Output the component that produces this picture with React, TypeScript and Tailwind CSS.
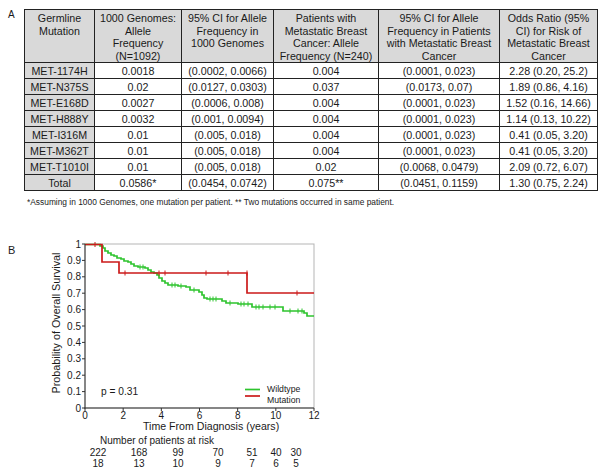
import React from "react";

const greenPath =
  "M85,242.5 H100 V244 H103 V246 H105 V249 H108 V251 H111 V253 H114 V254 H117 V256 H121 V257 H124 V259 H128 V260 H131 V262 H134 V264 H138 V265 H145 V266 H148 V268 H151 V270 H154 V271 H157 V273 H159 V276 H162 V279 H165 V281 H168 V283 H178 V284 H186 V285 H190 V288 H199 V290 H202 V293 H204 V296 H207 V297 H222 V299 H226 V301 H238 V302 H252 V305 H283 V309 H304 V311 H307 V314 H314";
const redPath = "M85,242.5 H102 V260 H119 V271 H247 V291 H314";

const greenCensor: [number, number][] = [
  [140, 265], [143, 265], [172, 283], [175, 283], [181, 284], [194, 288], [210, 297], [213, 297], [216, 297],
  [230, 301], [241, 302], [244, 302], [248, 302], [256, 305], [259, 305], [263, 305], [270, 305], [275, 305],
  [290, 309], [298, 309], [302, 309],
];
const redCensor: [number, number][] = [
  [95, 242.5], [125, 271], [159, 271], [165, 271], [206, 271], [228, 271], [247, 271], [297, 291],
];

const rows = [
  ["MET-1174H", "0.0018", "(0.0002, 0.0066)", "0.004", "(0.0001, 0.023)", "2.28 (0.20, 25.2)"],
  ["MET-N375S", "0.02", "(0.0127, 0.0303)", "0.037", "(0.0173, 0.07)", "1.89 (0.86, 4.16)"],
  ["MET-E168D", "0.0027", "(0.0006, 0.008)", "0.004", "(0.0001, 0.023)", "1.52 (0.16, 14.66)"],
  ["MET-H888Y", "0.0032", "(0.001, 0.0094)", "0.004", "(0.0001, 0.023)", "1.14 (0.13, 10.22)"],
  ["MET-I316M", "0.01", "(0.005, 0.018)", "0.004", "(0.0001, 0.023)", "0.41 (0.05, 3.20)"],
  ["MET-M362T", "0.01", "(0.005, 0.018)", "0.004", "(0.0001, 0.023)", "0.41 (0.05, 3.20)"],
  ["MET-T1010I", "0.01", "(0.005, 0.018)", "0.02", "(0.0068, 0.0479)", "2.09 (0.72, 6.07)"],
  ["Total", "0.0586*", "(0.0454, 0.0742)", "0.075**", "(0.0451, 0.1159)", "1.30 (0.75, 2.24)"],
];

const risk1 = ["222", "168", "99", "70", "51", "40", "30"];
const risk2 = ["18", "13", "10", "9", "7", "6", "5"];
const riskW = ["w-[40px]", "w-[42px]", "w-[36px]", "w-[44px]", "w-[24px]", "w-[24px]", "w-[16px]"];

const th = "border border-[#222] bg-[#d9d9d9] align-top text-center font-normal p-0 pt-[2px] leading-[12.5px] whitespace-nowrap";
const td = "border border-[#222] text-center p-0 h-[16px] leading-[14px] whitespace-nowrap";

export default function App() {
  const yTicks = Array.from({ length: 11 }, (_, i) => i);
  const xTicks = [0, 2, 4, 6, 8, 10, 12];
  return (
    <div className="w-[600px] h-[474px] bg-white text-[#1a1a1a] overflow-hidden font-['Liberation_Sans',Arial,sans-serif]">
      <div className="flex pt-[9px]">
        <div className="w-[24px] pl-[8px] text-[10px] leading-none pt-[1px]">A</div>
        <table className="border-collapse table-fixed w-[573px] text-[10.7px]">
          <colgroup>
            <col className="w-[70px]" />
            <col className="w-[87px]" />
            <col className="w-[92px]" />
            <col className="w-[105px]" />
            <col className="w-[121px]" />
            <col className="w-[98px]" />
          </colgroup>
          <thead>
            <tr className="h-[52px]">
              <th className={th}>Germline<br />Mutation</th>
              <th className={th}>1000 Genomes:<br />Allele<br />Frequency<br />(N=1092)</th>
              <th className={th}>95% CI for Allele<br />Frequency in<br />1000 Genomes</th>
              <th className={th}>Patients with<br />Metastatic Breast<br />Cancer: Allele<br />Frequency (N=240)</th>
              <th className={th}>95% CI for Allele<br />Frequency in Patients<br />with Metastatic Breast<br />Cancer</th>
              <th className={th}>Odds Ratio (95%<br />CI) for Risk of<br />Metastatic Breast<br />Cancer</th>
            </tr>
          </thead>
          <tbody>
            {rows.map((r) => (
              <tr key={r[0]}>
                {r.map((c, i) => (
                  <td key={i} className={i === 0 ? td + " bg-[#d9d9d9]" : td}>{c}</td>
                ))}
              </tr>
            ))}
          </tbody>
        </table>
      </div>
      <p className="ml-[27px] mt-[6px] text-[8.4px] leading-[10px]">
        *Assuming in 1000 Genomes, one mutation per patient. ** Two mutations occurred in same patient.
      </p>
      <div className="flex mt-[30px]">
        <div className="w-[30px] pl-[8px] pt-[8px] text-[11px] leading-none">B</div>
        <svg width="310" height="195" viewBox="30 235 310 195" className="block">
          <rect x="85" y="242" width="229" height="164" fill="none" stroke="#b5b5b5" strokeWidth="1" />
          <path d={greenPath} fill="none" stroke="#2ec42e" strokeWidth="1.7" />
          {greenCensor.map(([x, y], i) => (
            <line key={"g" + i} x1={x} x2={x} y1={y - 2.5} y2={y + 2.5} stroke="#2ec42e" strokeWidth="1" />
          ))}
          <path d={redPath} fill="none" stroke="#cc1a1a" strokeWidth="1.7" />
          {redCensor.map(([x, y], i) => (
            <line key={"r" + i} x1={x} x2={x} y1={y - 2.5} y2={y + 2.5} stroke="#cc1a1a" strokeWidth="1" />
          ))}
          <line x1="85" x2="85" y1="242" y2="406.5" stroke="#333" strokeWidth="1" />
          <line x1="84.5" x2="314" y1="406" y2="406" stroke="#333" strokeWidth="1" />
          {yTicks.map((i) => {
            const y = 406 - 16.4 * i;
            return (
              <g key={"y" + i}>
                <line x1="82" x2="85" y1={y} y2={y} stroke="#333" strokeWidth="1" />
                <text x="81" y={y + 3.6} textAnchor="end" fontSize="10" fill="#1a1a1a" fontFamily="Liberation Sans, Arial, sans-serif">
                  {i === 0 ? "0" : i === 10 ? "1" : "0." + i}
                </text>
              </g>
            );
          })}
          {xTicks.map((t) => {
            const x = 85 + (229 / 12) * t;
            return (
              <g key={"x" + t}>
                <line x1={x} x2={x} y1="406" y2="409" stroke="#333" strokeWidth="1" />
                <text x={x} y="417" textAnchor="middle" fontSize="10" fill="#1a1a1a" fontFamily="Liberation Sans, Arial, sans-serif">
                  {t}
                </text>
              </g>
            );
          })}
          <text x="143" y="428" fontSize="10.6" fill="#1a1a1a" fontFamily="Liberation Sans, Arial, sans-serif">
            Time From Diagnosis (years)
          </text>
          <text transform="translate(60,321) rotate(-90)" textAnchor="middle" fontSize="10.8" fill="#1a1a1a" fontFamily="Liberation Sans, Arial, sans-serif">
            Probability of Overall Survival
          </text>
          <text x="101" y="393" fontSize="10.2" fill="#1a1a1a" fontFamily="Liberation Sans, Arial, sans-serif">
            p = 0.31
          </text>
          <line x1="245" x2="260" y1="387.5" y2="387.5" stroke="#2ec42e" strokeWidth="1.7" />
          <line x1="245" x2="260" y1="394" y2="394" stroke="#cc1a1a" strokeWidth="1.7" />
          <text x="267" y="390" fontSize="8.7" fill="#1a1a1a" fontFamily="Liberation Sans, Arial, sans-serif">Wildtype</text>
          <text x="267" y="400.5" fontSize="8.7" fill="#1a1a1a" fontFamily="Liberation Sans, Arial, sans-serif">Mutation</text>
        </svg>
      </div>
      <div className="mt-[3px] text-[10px] leading-[11.5px]">
        <div className="pl-[100px]">Number of patients at risk</div>
        <div className="flex pl-[78px]">
          {risk1.map((v, i) => (
            <div key={i} className={riskW[i] + " text-center"}>{v}</div>
          ))}
        </div>
        <div className="flex pl-[78px]">
          {risk2.map((v, i) => (
            <div key={i} className={riskW[i] + " text-center"}>{v}</div>
          ))}
        </div>
      </div>
    </div>
  );
}
